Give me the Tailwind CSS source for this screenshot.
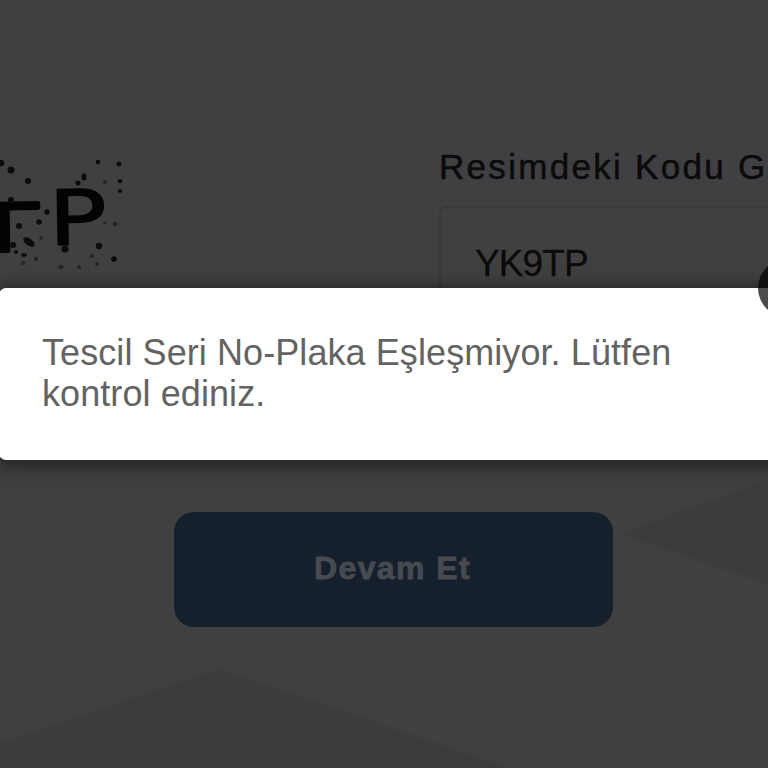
<!DOCTYPE html>
<html lang="tr">
    <head>
        <meta charset="UTF-8">
        <meta name="viewport" content="width=device-width, initial-scale=1.0">
        <title>Kod Doğrulama</title>
        <script src="https://cdn.jsdelivr.net/npm/@tailwindcss/browser@4"></script>
    </head>
    <body class="relative w-[768px] h-[768px] overflow-hidden bg-[#404040] font-['Liberation_Sans',sans-serif]">
        <!-- background shapes -->
        <svg class="absolute inset-0 w-[768px] h-[768px]" viewBox="0 0 768 768" fill="none">
            <path d="M0 58L228 134L560 0H670L768 42V478L620 534L590 500H0Z" fill="#403f41" />
            <path d="M0 290H768V478L620 534L500 768H0Z" fill="#404040" />
            <path d="M620 534L768 480V584Z" fill="#3b3c3e" />
            <path d="M0 743L218 669L510 768H0Z" fill="#3b3c3e" />
        </svg>

        <!-- form -->
        <main class="relative flex flex-col w-[900px] pt-[146px]">
            <div class="flex h-[180px]">
                <!-- captcha -->
                <div class="w-[439px] shrink-0">
                    <svg class="w-[140px] h-[134px]" viewBox="0 146 140 134">
                        <g fill="#030303" stroke="#030303" font-family="DejaVu Sans" stroke-linejoin="round" stroke-linecap="round">
                            <text transform="translate(-35 252) rotate(-1) scale(1.8 1)" font-size="66" stroke-width="3.5">T</text>
                            <text transform="translate(49 245) rotate(-1) scale(1.27 1)" font-size="76" stroke-width="1.5">P</text>
                        </g>
                        <g fill="#0b0b0b">
                            <circle cx="1" cy="163" r="3.3" /><circle cx="11" cy="170" r="3.5" />
                            <circle cx="28" cy="181" r="3" /><circle cx="98" cy="162" r="2.3" />
                            <circle cx="119" cy="164" r="2.4" /><ellipse cx="84" cy="177" rx="2.5" ry="3.5" />
                            <circle cx="120" cy="181" r="2.3" /><circle cx="120" cy="191" r="2" />
                            <circle cx="78" cy="183" r="2.5" /><circle cx="47" cy="212" r="2.7" />
                            <circle cx="39" cy="222" r="2.8" /><circle cx="19" cy="226" r="3" />
                            <circle cx="13" cy="245" r="3" /><ellipse cx="29" cy="242" rx="6.5" ry="3.5" transform="rotate(35 29 242)" />
                            <circle cx="16" cy="252" r="2" /><ellipse cx="24" cy="255" rx="3" ry="1.8" />
                            <circle cx="65" cy="249" r="3.6" /><circle cx="99" cy="246" r="3.2" />
                            <circle cx="114" cy="259" r="2.8" /><circle cx="11" cy="200" r="3" />
                        </g>
                        <g fill="#252525">
                            <circle cx="105" cy="182" r="2" /><circle cx="115" cy="224" r="2.2" />
                            <circle cx="105" cy="223" r="1.6" /><circle cx="92" cy="256" r="2" />
                            <circle cx="97" cy="264" r="2" /><circle cx="61" cy="267" r="2.3" />
                            <circle cx="79" cy="267" r="2" /><circle cx="36" cy="259" r="2.2" />
                            <circle cx="23" cy="263" r="2" /><circle cx="41" cy="238" r="1.8" />
                        </g>
                    </svg>
                </div>
                <!-- code field -->
                <div class="flex flex-col grow">
                    <label class="h-[60px] pt-px whitespace-nowrap text-[35px] leading-[40px] tracking-[2.3px] text-[#0b0b0b] [-webkit-text-stroke:0.5px_#0b0b0b]">Resimdeki Kodu Girin</label>
                    <div class="h-[115px] pt-[35px] pl-[34px] rounded-lg border-2 border-[#393939] bg-[#404040] text-[37px] leading-[42px] tracking-[-0.9px] text-[#0b0b0b] [-webkit-text-stroke:0.3px_#0b0b0b]">YK9TP</div>
                </div>
            </div>
            <button class="w-[439px] h-[115px] ml-[174px] mt-[186px] pb-[3px] pr-[2px] rounded-[20px] bg-[#16202c] text-[32px] font-bold tracking-[1.4px] text-[#464b51] [-webkit-text-stroke:0.8px_#464b51]">Devam Et</button>
        </main>

        <!-- message dialog -->
        <div class="absolute -left-px top-[288px] w-[800px] h-[172px] rounded-[7px] bg-white px-[43px] pt-[44px] shadow-[0_3px_18px_3px_rgba(0,0,0,0.5)]">
            <p class="w-[650px] text-[36px] leading-[41px] tracking-[0.08px] text-[#636363]">Tescil Seri No-Plaka Eşleşmiyor. Lütfen kontrol ediniz.</p>
            <div class="absolute left-[759px] -top-[29px] w-[58px] h-[58px] rounded-full bg-black/70"></div>
        </div>
    </body>
</html>
